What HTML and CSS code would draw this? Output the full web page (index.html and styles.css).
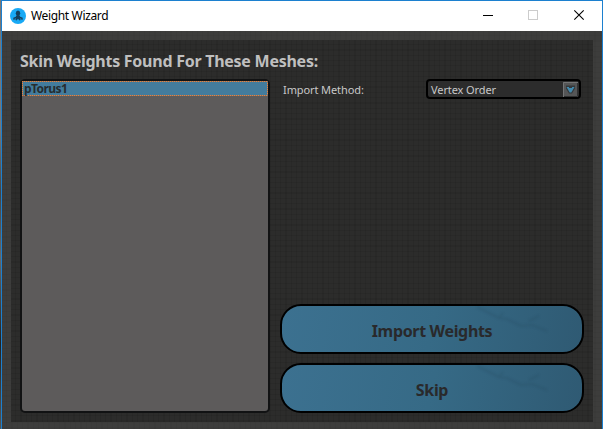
FILE: index.html
```html
<!DOCTYPE html>
<html lang="en">
<head>
<meta charset="utf-8">
<title>Weight Wizard</title>
<link rel="stylesheet" href="styles.css">
</head>
<body>
<div class="window">
  <header class="titlebar">
    <svg class="logo" width="16" height="16" viewBox="0 0 16 16">
      <circle cx="8" cy="8" r="8" fill="#18a9f5"/>
      <path d="M7.200 7.500L6 9.500l-2 .8v1.500M7.300 8.500L6 12.200M8.800 7.500L10 9.500l2 .8v1.500M8.700 8.500l1.300 3.700M8 7v4.500" fill="none" stroke="#123e5c" stroke-width="1.400"/>
      <ellipse cx="8" cy="5.200" rx="2.200" ry="2.600" fill="#123e5c"/>
    </svg>
    <h1 class="title">Weight Wizard</h1>
    <svg class="controls" width="110" height="30" viewBox="0 0 110 30" fill="none">
      <path d="M0 14.500h10" stroke="#000"/>
      <rect x="45.500" y="9.500" width="9" height="9" stroke="#ccc"/>
      <path d="M91.300 9.300l9.400 9.400M100.700 9.300l-9.400 9.400" stroke="#000" stroke-width="1.100"/>
    </svg>
  </header>
  <main class="body">
    <section class="panel">
      <h2 class="heading">Skin Weights Found For These Meshes:</h2>
      <div class="columns">
        <div class="list"><div class="item">pTorus1</div></div>
        <div class="side">
          <div class="method">
            <span class="label">Import Method:</span>
            <div class="select">
              <span>Vertex Order</span>
              <svg width="15" height="15" viewBox="0 0 15 15">
                <rect width="15" height="15" fill="#555657"/>
                <path d="M.5 15V.5H15" stroke="#737475" fill="none"/>
                <path d="M14.500 1v13.500H1" stroke="#303132" fill="none"/>
                <path d="M3 3.500h9v3l-3 5H6l-3-5z" fill="#35383a"/>
                <path d="M3.500 5h8L8.300 10.500H6.700z" fill="#4289ad"/>
                <path d="M6 5h3v1H6z" fill="#35383a"/>
              </svg>
            </div>
          </div>
          <div class="actions">
            <button class="action" type="button">
              <svg class="grain" viewBox="0 0 300 46"><path d="M195 1l22 11 8 1 14 7 11-1 15 6M221 7l-4 5M247 15l10-5"/></svg>
              <span>Import Weights</span>
            </button>
            <button class="action" type="button">
              <svg class="grain" viewBox="0 0 300 46"><path d="M195 1l22 11 8 1 14 7 11-1 15 6M221 7l-4 5M247 15l10-5"/></svg>
              <span>Skip</span>
            </button>
          </div>
        </div>
      </div>
    </section>
  </main>
</div>
</body>
</html>
```
FILE: styles.css
```css
* { box-sizing: border-box; }
body {
  margin: 0;
  height: 429px;
  overflow: hidden;
  padding-left: 1px;
  background: linear-gradient(#777 0 30%, #444 45%, #666 60%, #222 80%, #555);
  font-family: "Noto Sans", "Open Sans", sans-serif;
}
.window {
  height: 429px;
  display: flex;
  flex-direction: column;
  border: 1px solid #1c80cf;
  border-bottom: 0;
}
.titlebar {
  height: 30px;
  flex: none;
  display: flex;
  align-items: center;
  padding-left: 8px;
  background: #fff;
}
.logo { margin-right: 5px; }
.title {
  margin: 0;
  font-size: 12px;
  font-weight: 400;
  line-height: 16px;
  letter-spacing: -0.35px;
  color: #000;
}
.controls { margin-left: auto; margin-right: 9px; }
.body {
  flex: 1;
  padding: 9px 9px 7px;
  background:
    repeating-linear-gradient(90deg, transparent 0 4px, rgba(0,0,0,.04) 4px 5.300px),
    repeating-linear-gradient(transparent 0 4px, rgba(0,0,0,.04) 4px 5.300px),
    #3d3d3c;
}
.panel {
  height: 382px;
  padding: 8px 9px 9px;
  background:
    repeating-linear-gradient(90deg, transparent 0 4px, rgba(0,0,0,.08) 4px 5.300px),
    repeating-linear-gradient(transparent 0 4px, rgba(0,0,0,.08) 4px 5.300px),
    #2c2c2b;
}
.heading {
  margin: 0;
  height: 31px;
  font-size: 16px;
  line-height: 26px;
  font-weight: 700;
  letter-spacing: -0.26px;
  white-space: nowrap;
  color: #bfbfbf;
}
.columns { display: flex; height: 334px; }
.list {
  width: 250px;
  border: 2px solid #111213;
  border-radius: 5px;
  background: #5d5b5b;
}
.item {
  height: 15px;
  padding: 1px 0 0 2px;
  background:
    repeating-linear-gradient(90deg, #e8823c 0 1px, #7d736c 1px 2px) 0 0 / 100% 1px no-repeat,
    repeating-linear-gradient(90deg, #e8823c 0 1px, #7d736c 1px 2px) 0 100% / 100% 1px no-repeat,
    repeating-linear-gradient(#e8823c 0 1px, #7d736c 1px 2px) 0 0 / 1px 100% no-repeat,
    repeating-linear-gradient(#e8823c 0 1px, #7d736c 1px 2px) 100% 0 / 1px 100% no-repeat,
    #437c9d;
  color: #252c30;
  font-size: 12px;
  line-height: 13px;
  font-weight: 700;
  letter-spacing: -0.55px;
}
.side {
  width: 304px;
  margin-left: 10px;
  display: flex;
  flex-direction: column;
  justify-content: space-between;
}
.method {
  display: flex;
  align-items: center;
  justify-content: space-between;
  padding: 0 3px;
  font-size: 11px;
  letter-spacing: -0.1px;
  color: #c8c8c8;
}
.label { padding-top: 1px; }
.select {
  width: 155px;
  height: 20px;
  display: flex;
  align-items: center;
  justify-content: space-between;
  padding: 0 1px 0 3px;
  border: 2px solid #000;
  border-radius: 4px;
  background: #2c2c2c;
}
.select span { padding-top: 1px; }
.actions { display: flex; flex-direction: column; gap: 9px; }
.action {
  position: relative;
  height: 50px;
  padding: 3px 0 0;
  border: 2px solid #000;
  border-radius: 21px;
  overflow: hidden;
  background: linear-gradient(100deg, #3c7190, #366a86 50%, #2f5a73);
  color: #29292b;
  font: 700 16px/22px "Noto Sans", "Open Sans", sans-serif;
  letter-spacing: -0.33px;
}
.grain {
  position: absolute;
  inset: 0;
  fill: none;
  stroke: #294f65;
  stroke-width: 2;
  opacity: .3;
  filter: blur(1px);
}
.action span { position: relative; }
```
